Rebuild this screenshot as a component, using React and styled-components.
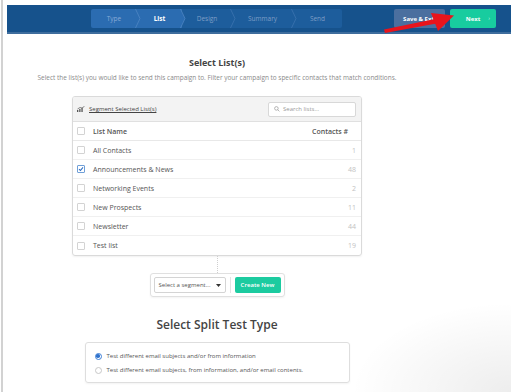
import React from "react";
import styled, { createGlobalStyle, css } from "styled-components";

const GlobalStyle = createGlobalStyle`
  html, body { margin: 0; padding: 0; background: #fff; }
  body { font-family: "Open Sans", "Liberation Sans", sans-serif; color: #555; }
  * { box-sizing: border-box; }
`;

const Frame = styled.div`
  position: relative;
  margin-left: 1px;
  border-left: 2px solid #d2d2d2;
  padding: 5px 0 0 4px;
  height: 392px;
  overflow: hidden;
  background: radial-gradient(ellipse 160px 90px at 100% 100%, rgba(0,0,0,0.07), rgba(0,0,0,0) 100%);
`;

const Header = styled.header`
  display: flex;
  align-items: center;
  height: 29px;
  background: #16528c;
  border-bottom: 2px solid #3e6d9d;
  padding: 0 15px 0 84px;
`;

const Steps = styled.nav`
  display: flex;
  height: 19px;
`;

const Step = styled.div`
  position: relative;
  width: ${(p) => p.$w}px;
  display: flex;
  align-items: center;
  justify-content: center;
  font-size: 6.5px;
  background: ${(p) => (p.$lit ? "#2b6cb1" : "#1d5d9c")};
  color: ${(p) => (p.$current ? "#fff" : p.$lit ? "#86a9d6" : "#7d9dc6")};
  font-weight: ${(p) => (p.$current ? 700 : 400)};
  &:first-child { border-radius: 2px 0 0 2px; }
  &:last-child { border-radius: 0 2px 2px 0; }
`;

const Chevron = styled.svg`
  position: absolute;
  right: -4px;
  top: 0;
  width: 6px;
  height: 19px;
  z-index: 1;
`;

const Actions = styled.div`
  margin-left: auto;
  display: flex;
  gap: 5px;
`;

const HeadButton = styled.div`
  position: relative;
  height: 19px;
  width: ${(p) => p.$w}px;
  border-radius: 2px;
  display: flex;
  align-items: center;
  justify-content: center;
  color: #fff;
  font-size: 6px;
  font-weight: 700;
  ${(p) =>
    p.$primary
      ? css`background: #18cc9f;`
      : css`background: #4b6f9f;`}
`;

const NextCaret = styled.span`
  position: absolute;
  right: 6px;
  top: 5px;
  font-size: 6px;
  font-weight: 400;
  color: #bdf3e3;
`;

const ArrowOverlay = styled.svg`
  position: absolute;
  left: 0;
  top: 0;
  width: 511px;
  height: 40px;
  pointer-events: none;
`;

const Main = styled.main`
  width: 420px;
  display: flex;
  flex-direction: column;
  align-items: center;
`;

const Title = styled.h1`
  margin: 23px 0 0;
  font-size: 9px;
  line-height: 12px;
  font-weight: 700;
  color: #444;
`;

const Subtitle = styled.p`
  margin: 5px 0 0;
  font-size: 6.45px;
  line-height: 8px;
  color: #8a8a8a;
  white-space: nowrap;
`;

const Table = styled.section`
  margin-top: 14px;
  width: 290px;
  border: 1px solid #dadada;
  border-radius: 3px;
  box-shadow: 0 1px 2px rgba(0, 0, 0, 0.06);
  overflow: hidden;
`;

const Toolbar = styled.div`
  height: 25px;
  background: #f3f3f3;
  border-bottom: 1px solid #e0e0e0;
  display: flex;
  align-items: center;
  justify-content: space-between;
  padding: 0 5px 0 4px;
`;

const SegmentLink = styled.a`
  display: flex;
  align-items: center;
  gap: 4px;
  font-size: 6px;
  color: #444;
  text-decoration: underline;
`;

const Search = styled.div`
  width: 88px;
  height: 15px;
  background: #fff;
  border: 1px solid #d8d8d8;
  border-radius: 2px;
  display: flex;
  align-items: center;
  gap: 3px;
  padding-left: 5px;
  font-size: 6px;
  color: #999;
`;

const Row = styled.div`
  height: 19px;
  display: flex;
  align-items: center;
  padding: 0 ${(p) => (p.$head ? 13 : 5)}px 0 4px;
  font-size: 7px;
  color: #555;
  font-weight: ${(p) => (p.$head ? 600 : 400)};
  border-bottom: 1px solid ${(p) => (p.$head ? "#e8e8e8" : "#f0f0f0")};
  &:last-child { border-bottom: none; }
`;

const Box = styled.span`
  width: 8px;
  height: 8px;
  border: 1px solid ${(p) => (p.$on ? "#6f9fd8" : "#d3d3d3")};
  border-radius: 1px;
  margin-right: 8px;
  display: flex;
  align-items: center;
  justify-content: center;
  background: #fff;
`;

const Count = styled.span`
  margin-left: auto;
  color: ${(p) => (p.$head ? "#555" : "#c2c2c2")};
`;

const Connector = styled.div`
  width: 0;
  height: 17px;
  border-left: 1px dotted #cfcfcf;
`;

const SegmentBox = styled.div`
  width: 135px;
  height: 24px;
  border: 1px solid #e0e0e0;
  border-radius: 3px;
  display: flex;
  align-items: center;
  padding: 0 3px;
  box-shadow: 0 1px 2px rgba(0, 0, 0, 0.05);
`;

const Select = styled.div`
  width: 72px;
  height: 16px;
  border: 1px solid #d4d4d4;
  border-radius: 2px;
  display: flex;
  align-items: center;
  justify-content: space-between;
  padding: 0 4px;
  font-size: 6px;
  color: #555;
`;

const Divider = styled.span`
  width: 1px;
  height: 16px;
  background: #e2e2e2;
  margin: 0 4px;
`;

const CreateButton = styled.div`
  width: 46px;
  height: 16px;
  border-radius: 2px;
  background: #1ccba0;
  color: #fff;
  font-size: 6px;
  font-weight: 600;
  display: flex;
  align-items: center;
  justify-content: center;
`;

const SplitTitle = styled.h2`
  margin: 20px 0 0;
  font-size: 12px;
  line-height: 16px;
  font-weight: 600;
  color: #444;
`;

const RadioBox = styled.div`
  margin-top: 9px;
  width: 265px;
  height: 41px;
  border: 1px solid #dedede;
  border-radius: 3px;
  box-shadow: 0 1px 2px rgba(0, 0, 0, 0.05);
  padding: 9px 0 0 9px;
  display: flex;
  flex-direction: column;
  gap: 6px;
`;

const RadioRow = styled.label`
  height: 8px;
  display: flex;
  align-items: center;
  gap: 5px;
  font-size: 6px;
  color: #555;
`;

const Radio = styled.span`
  width: 7px;
  height: 7px;
  border-radius: 50%;
  border: 1px solid ${(p) => (p.$on ? "#3d7fd6" : "#c8c8c8")};
  display: flex;
  align-items: center;
  justify-content: center;
  &::after {
    content: "";
    width: 3.5px;
    height: 3.5px;
    border-radius: 50%;
    background: ${(p) => (p.$on ? "#2f72cc" : "transparent")};
  }
`;

const steps = [
  { label: "Type", w: 46, lit: true },
  { label: "List", w: 45, lit: true, current: true },
  { label: "Design", w: 50 },
  { label: "Summary", w: 61 },
  { label: "Send", w: 49 },
];

const lists = [
  { name: "All Contacts", n: 1 },
  { name: "Announcements & News", n: 48, on: true },
  { name: "Networking Events", n: 2 },
  { name: "New Prospects", n: 11 },
  { name: "Newsletter", n: 44 },
  { name: "Test list", n: 19 },
];

export default function App() {
  return (
    <>
      <GlobalStyle />
      <Frame>
        <Header>
          <Steps>
            {steps.map((s, i) => (
              <Step key={s.label} $w={s.w} $lit={s.lit} $current={s.current}>
                {s.label}
                {i < steps.length - 1 && (
                  <Chevron viewBox="0 0 6 19">
                    {s.current && <polygon points="0,0 5,9.5 0,19" fill="#2b6cb1" />}
                    <polyline
                      points="0.5,0 5,9.5 0.5,19"
                      fill="none"
                      stroke={s.lit ? "#4f86c4" : "#3c74b0"}
                      strokeWidth="0.8"
                    />
                  </Chevron>
                )}
              </Step>
            ))}
          </Steps>
          <Actions>
            <HeadButton $w={51}>Save &amp; Exit</HeadButton>
            <HeadButton $w={46} $primary>
              Next
              <NextCaret>›</NextCaret>
            </HeadButton>
          </Actions>
        </Header>

        <Main>
          <Title>Select List(s)</Title>
          <Subtitle>
            Select the list(s) you would like to send this campaign to. Filter your campaign to specific contacts that match conditions.
          </Subtitle>

          <Table>
            <Toolbar>
              <SegmentLink>
                <svg width="8" height="6" viewBox="0 0 8 6">
                  <rect x="0" y="4" width="1.3" height="2" fill="#555" />
                  <rect x="2.2" y="3" width="1.3" height="3" fill="#555" />
                  <rect x="4.4" y="2" width="1.3" height="4" fill="#555" />
                  <path d="M0.5 3 L3 1.5 L5 2 L7.5 0.3" stroke="#555" strokeWidth="0.7" fill="none" />
                </svg>
                Segment Selected List(s)
              </SegmentLink>
              <Search>
                <svg width="6" height="6" viewBox="0 0 10 10">
                  <circle cx="4" cy="4" r="3" fill="none" stroke="#999" strokeWidth="1.2" />
                  <line x1="6.2" y1="6.2" x2="9" y2="9" stroke="#999" strokeWidth="1.2" />
                </svg>
                Search lists...
              </Search>
            </Toolbar>
            <Row $head>
              <Box />
              List Name
              <Count $head>Contacts #</Count>
            </Row>
            {lists.map((l) => (
              <Row key={l.name}>
                <Box $on={l.on}>
                  {l.on && (
                    <svg width="6" height="6" viewBox="0 0 6 6">
                      <path d="M1 3.2 L2.4 4.5 L5 1.4" stroke="#2f6fc4" strokeWidth="1.1" fill="none" />
                    </svg>
                  )}
                </Box>
                {l.name}
                <Count>{l.n}</Count>
              </Row>
            ))}
          </Table>

          <Connector />
          <SegmentBox>
            <Select>
              Select a segment...
              <svg width="5" height="3" viewBox="0 0 5 3">
                <polygon points="0,0 5,0 2.5,3" fill="#333" />
              </svg>
            </Select>
            <Divider />
            <CreateButton>Create New</CreateButton>
          </SegmentBox>

          <SplitTitle>Select Split Test Type</SplitTitle>
          <RadioBox>
            <RadioRow>
              <Radio $on />
              Test different email subjects and/or from information
            </RadioRow>
            <RadioRow>
              <Radio />
              Test different email subjects, from information, and/or email contents.
            </RadioRow>
          </RadioBox>
        </Main>

        <ArrowOverlay viewBox="0 0 511 40">
          <polygon points="381,29.5 432,19 433.5,23.5 382,33" fill="#e8141c" />
          <polygon points="428,13 451,15.5 435,31" fill="#e8141c" />
        </ArrowOverlay>
      </Frame>
    </>
  );
}
